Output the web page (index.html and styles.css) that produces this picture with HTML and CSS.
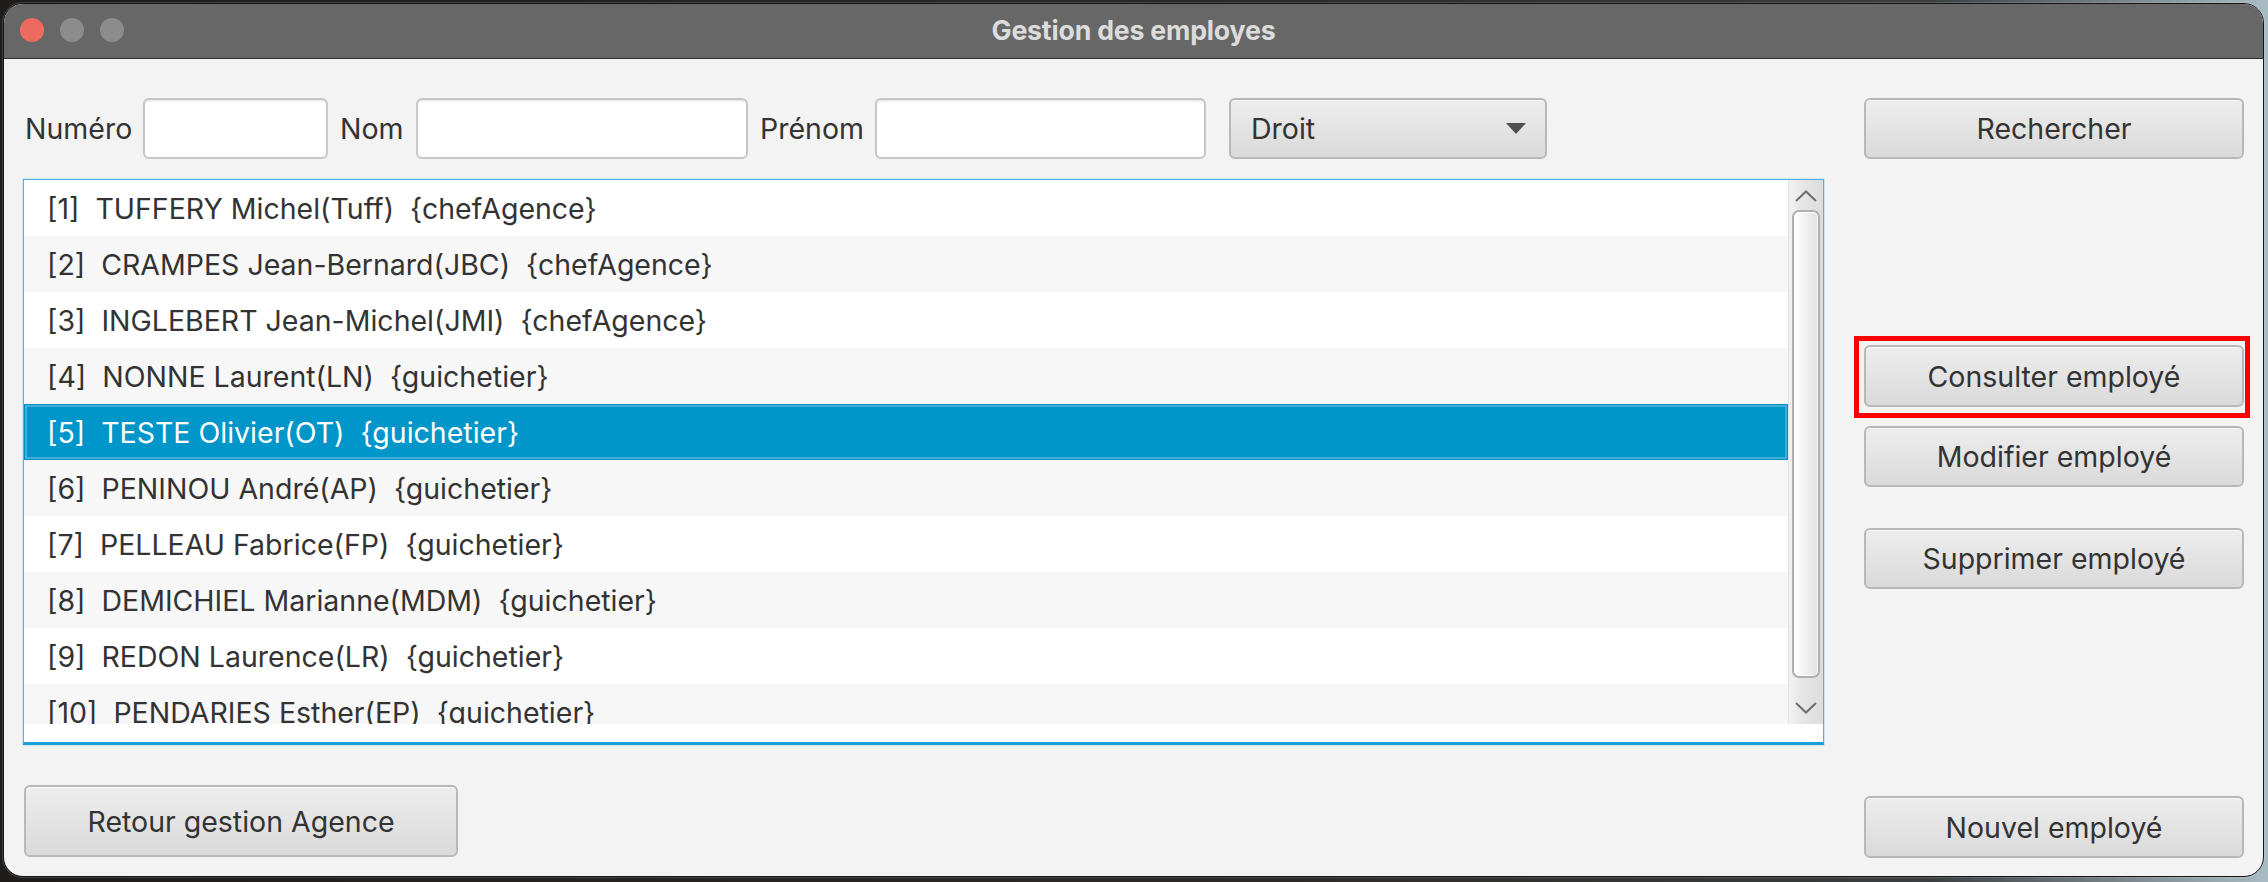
FILE: index.html
```html
<!DOCTYPE html>
<html lang="fr">
<head>
<meta charset="utf-8">
<title>Gestion des employes</title>
<link rel="stylesheet" href="styles.css">
</head>
<body>
<div class="window">
  <div class="titlebar">
    <div class="lights">
      <span class="light light-red"></span>
      <span class="light"></span>
      <span class="light"></span>
    </div>
    <div class="title">Gestion des employes</div>
  </div>
  <div class="content">
    <div class="search">
      <span class="lbl lbl-num">Numéro</span>
      <div class="input in-num"></div>
      <span class="lbl lbl-nom">Nom</span>
      <div class="input in-nom"></div>
      <span class="lbl lbl-pre">Prénom</span>
      <div class="input in-pre"></div>
      <div class="combo">
        <span class="combo-text">Droit</span>
        <span class="caret"></span>
      </div>
    </div>
    <div class="btn btn-search">Rechercher</div>

    <div class="list">
      <div class="viewport">
        <div class="rows">
          <div class="row">[1]  TUFFERY Michel(Tuff)  {chefAgence}</div>
          <div class="row row-alt">[2]  CRAMPES Jean-Bernard(JBC)  {chefAgence}</div>
          <div class="row">[3]  INGLEBERT Jean-Michel(JMI)  {chefAgence}</div>
          <div class="row row-alt">[4]  NONNE Laurent(LN)  {guichetier}</div>
          <div class="row row-selected">[5]  TESTE Olivier(OT)  {guichetier}</div>
          <div class="row row-alt">[6]  PENINOU André(AP)  {guichetier}</div>
          <div class="row">[7]  PELLEAU Fabrice(FP)  {guichetier}</div>
          <div class="row row-alt">[8]  DEMICHIEL Marianne(MDM)  {guichetier}</div>
          <div class="row">[9]  REDON Laurence(LR)  {guichetier}</div>
          <div class="row row-alt">[10]  PENDARIES Esther(EP)  {guichetier}</div>
        </div>
        <div class="vscroll">
          <div class="arrow arrow-up">
            <svg width="22" height="12" viewBox="0 0 22 12"><path d="M1 11 L11 1.5 L21 11" fill="none" stroke="#6e6e6e" stroke-width="2"/></svg>
          </div>
          <div class="track"><div class="thumb"></div></div>
          <div class="arrow arrow-down">
            <svg width="22" height="12" viewBox="0 0 22 12"><path d="M1 1 L11 10.5 L21 1" fill="none" stroke="#6e6e6e" stroke-width="2"/></svg>
          </div>
        </div>
      </div>
      <div class="list-foot"></div>
    </div>

    <div class="actions">
      <div class="highlight">
        <div class="btn btn-action btn-consult">Consulter employé</div>
      </div>
      <div class="btn btn-action btn-modify">Modifier employé</div>
      <div class="btn btn-action btn-delete">Supprimer employé</div>
    </div>

    <div class="bottom-left">
      <div class="btn btn-back">Retour gestion Agence</div>
    </div>
    <div class="bottom-right">
      <div class="btn btn-new">Nouvel employé</div>
    </div>
  </div>
</div>
</body>
</html>
```

FILE: styles.css
```css
* {
  box-sizing: border-box;
}

html, body {
  margin: 0;
  padding: 0;
}

body {
  width: 2268px;
  height: 882px;
  overflow: hidden;
  background: linear-gradient(to right, #1f1d1b 0%, #2c2a28 55%, #3b3d3e 85%, #a9bcc3 100%);
  font-family: Inter, "Noto Sans", "Liberation Sans", sans-serif;
  font-size: 28.5px;
  color: #333333;
  padding: 3px 0 0 3px;
}

.window {
  width: 2261px;
  height: 874px;
  border: 1px solid #141414;
  border-radius: 20px;
  background: #f3f3f3;
  display: flex;
  flex-direction: column;
  overflow: hidden;
  box-shadow: 0 0 0 1px rgba(255,255,255,0.15);
}

.titlebar {
  height: 55px;
  flex: 0 0 55px;
  background: #676767;
  border-bottom: 1px solid #2c2c2c;
  position: relative;
  display: flex;
  align-items: center;
  justify-content: center;
}

.lights {
  position: absolute;
  left: 16px;
  top: 14px;
  display: flex;
  gap: 16px;
}

.light {
  width: 24px;
  height: 24px;
  border-radius: 50%;
  background: #8c8c8c;
}

.light-red {
  background: #ed6a5e;
}

.title {
  font-weight: 700;
  font-size: 26.7px;
  color: #dcdcdc;
  letter-spacing: -0.2px;
  margin-top: -2px;
}

.content {
  flex: 1;
  display: grid;
  grid-template-columns: 1801px 380px;
  grid-template-rows: 61px 566px 93px;
  column-gap: 40px;
  row-gap: 20px;
  padding: 39px 19px 0 19px;
}

/* search row */
.search {
  display: flex;
  align-items: center;
}

.lbl {
  flex: 0 0 auto;
  color: #333;
  padding-left: 2px;
  white-space: nowrap;
}

.lbl-num { width: 110px; margin-right: 10px; }
.lbl-nom { width: 68px; margin-left: 10px; margin-right: 10px; }
.lbl-pre { width: 107px; margin-left: 10px; margin-right: 10px; }

.input {
  height: 61px;
  background: #ffffff;
  border: 2px solid #c6c6c6;
  border-radius: 6px;
  box-shadow: inset 0 3px 3px -2px #e2e2e2;
}

.in-num { width: 185px; }
.in-nom { width: 332px; }
.in-pre { width: 331px; }

.combo {
  width: 318px;
  height: 61px;
  margin-left: 23px;
  border: 2px solid #b8b8b8;
  border-radius: 6px;
  background: linear-gradient(#ededed, #dadada);
  box-shadow: inset 0 1px 0 #f7f7f7;
  display: flex;
  align-items: center;
  justify-content: space-between;
  padding: 0 19px 0 20px;
}

.caret {
  width: 0;
  height: 0;
  border-left: 10.5px solid transparent;
  border-right: 10.5px solid transparent;
  border-top: 11px solid #505050;
}

/* buttons */
.btn {
  height: 61px;
  border: 2px solid #b8b8b8;
  border-radius: 6px;
  background: linear-gradient(#ededed, #dadada);
  box-shadow: inset 0 1px 0 #f7f7f7;
  display: flex;
  align-items: center;
  justify-content: center;
  color: #333;
  white-space: nowrap;
}

/* list */
.list {
  background: #ffffff;
  border: 1px solid #4fb2df;
  border-bottom: 3px solid #1a9fd8;
  box-shadow: 0 0 0 1px #cfe7f3;
  display: flex;
  flex-direction: column;
}

.viewport {
  height: 544px;
  display: flex;
}

.rows {
  flex: 1;
  overflow: hidden;
}

.row {
  height: 56px;
  padding-left: 23px;
  display: flex;
  align-items: center;
  white-space: pre;
  background: #ffffff;
  color: #333;
}

.row-alt {
  background: #f7f7f7;
}

.row-selected {
  background: #0096c9;
  color: #ffffff;
  box-shadow: inset 0 0 0 1px #0090c0, inset 0 0 0 3px #42aedb;
}

.list-foot {
  flex: 1;
  background: #ffffff;
}

.vscroll {
  width: 35px;
  flex: 0 0 35px;
  background: linear-gradient(to right, #f2f2f2, #e6e6e6 40%, #dcdcdc);
  border-left: 1px solid #e4e4e4;
  display: flex;
  flex-direction: column;
}

.arrow {
  height: 28px;
  flex: 0 0 28px;
  display: flex;
  align-items: center;
  justify-content: center;
}

.arrow-up { padding-top: 4px; }
.arrow-down { padding-bottom: 4px; }

.track {
  flex: 1;
  padding: 2px 3px 18px 3px;
}

.thumb {
  height: 100%;
  border: 2px solid #b0b0b0;
  border-radius: 7px;
  background: linear-gradient(to right, #ffffff, #f1f1f1 50%, #e0e0e0);
  box-shadow: inset 0 0 0 1px #ffffff;
}

/* right column actions */
.actions {
  display: flex;
  flex-direction: column;
}

.highlight {
  margin: 157px -6px 0 -10px;
  border: 5px solid #ff0000;
  padding: 4px 1px 6px 5px;
}

.btn-consult { height: 62px; }
.btn-modify { margin-top: 8px; }
.btn-delete { margin-top: 41px; }

.bottom-left {
  display: flex;
  align-items: flex-start;
  padding-top: 20px;
}

.btn-back {
  width: 434px;
  height: 72px;
  margin-left: 1px;
}

.bottom-right {
  display: flex;
  align-items: flex-end;
  padding-top: 20px;
}

.btn-new {
  width: 100%;
  height: 62px;
}
```
